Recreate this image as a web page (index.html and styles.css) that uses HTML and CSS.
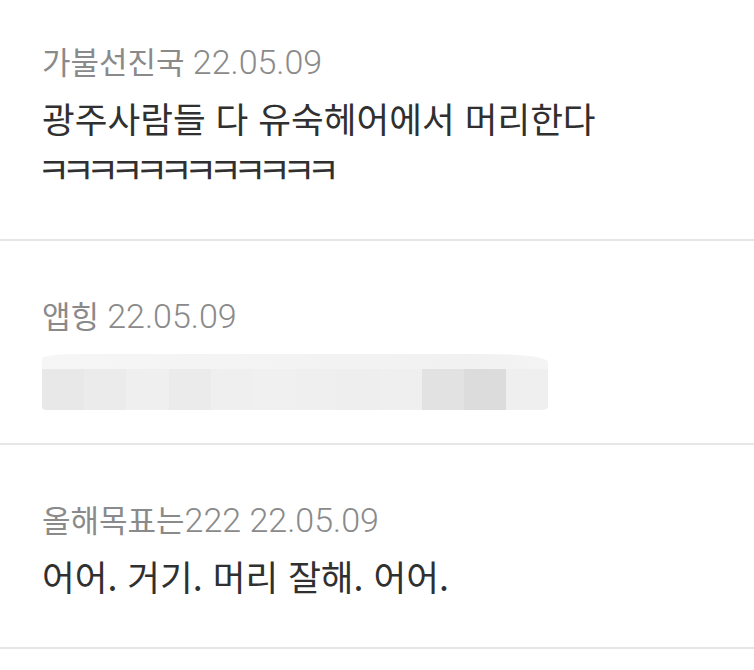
FILE: index.html
```html
<!DOCTYPE html>
<html lang="ko">
<head>
<meta charset="utf-8">
<link rel="stylesheet" href="styles.css">
</head>
<body>
<ul class="comments">
  <li class="comment">
    <div class="meta"><span class="name">가불선진국</span> <span class="date">22.05.09</span></div>
    <p class="text">광주사람들 다 유숙헤어에서 머리한다<span class="laugh">ㅋㅋㅋㅋㅋㅋㅋㅋㅋㅋㅋㅋ</span></p>
  </li>
  <li class="comment">
    <div class="meta"><span class="name">앱힝</span> <span class="date">22.05.09</span></div>
    <div class="blur">
      <div class="blur-top"></div>
      <div class="blur-row">
        <span style="background:#e8e8e8"></span>
        <span style="background:#ebebeb"></span>
        <span style="background:#efefef"></span>
        <span style="background:#ebebeb"></span>
        <span style="background:#efefef"></span>
        <span style="background:#f0f0f0"></span>
        <span style="background:#efefef"></span>
        <span style="background:#eeeeee"></span>
        <span style="background:#efefef"></span>
        <span style="background:#e2e2e2"></span>
        <span style="background:#dcdcdc"></span>
        <span style="background:#efefef"></span>
      </div>
    </div>
  </li>
  <li class="comment">
    <div class="meta"><span class="name">올해목표는</span><span class="date">222 22.05.09</span></div>
    <p class="text">어어. 거기. 머리 잘해. 어어.</p>
  </li>
</ul>
</body>
</html>
```
FILE: styles.css
```css
html, body {
  margin: 0;
  padding: 0;
  background: #ffffff;
}
body {
  font-family: Roboto, "Noto Sans CJK KR", sans-serif;
  overflow: hidden;
}
.comments {
  list-style: none;
  margin: -13px 0 0;
  padding: 0;
}
.comment {
  padding: 54px 42px 47px;
  border-bottom: 2px solid #e6e6e6;
}
.meta {
  height: 40px;
  line-height: 40px;
  font-size: 33px;
  color: #8a8a8a;
  white-space: nowrap;
}
.name {
  font-family: "Noto Sans CJK KR", sans-serif;
  font-size: 31px;
}
.date {
  font-family: Roboto, "Noto Sans CJK KR", sans-serif;
  font-weight: 300;
  font-size: 34px;
}
.text {
  margin: 13px 0 0;
  font-family: "Noto Sans CJK KR", sans-serif;
  font-size: 35.6px;
  line-height: 48px;
  color: #303030;
}
.laugh {
  display: block;
  margin: 2px 0 0 -5px;
  font-size: 36px;
  letter-spacing: -8.6px;
}
.blur {
  width: 506px;
  margin: 19px 0 -14px;
  height: 56px;
  display: flex;
  flex-direction: column;
}
.blur-top {
  height: 15px;
  background: linear-gradient(90deg, #f6f6f6, #f3f3f3 50%, #f1f1f1 85%, #f4f4f4);
  border-radius: 40px 60px 0 0 / 4px 8px 0 0;
}
.blur-row {
  flex: 1;
  display: grid;
  grid-template-columns: repeat(12, 1fr);
  border-radius: 0 0 6px 4px / 0 0 3px 3px;
  overflow: hidden;
}
```
